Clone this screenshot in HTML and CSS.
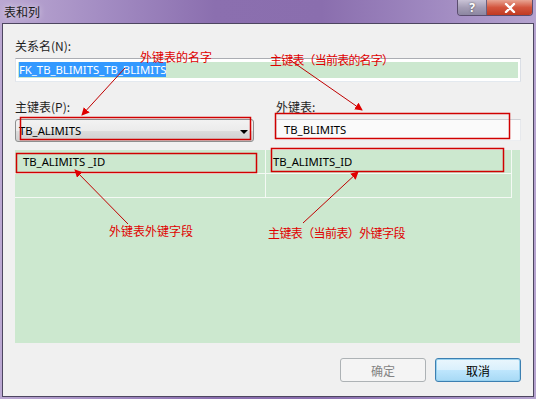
FILE: index.html
```html
<!DOCTYPE html>
<html lang="zh-CN">
<head>
    <meta charset="UTF-8">
    <title>表和列</title>
    <link rel="stylesheet" href="styles.css">
</head>
<body>
    <div class="window">
        <div class="titlebar">
            <span class="title">表和列</span>
            <div class="caption-btns">
                <span class="btn-help">?</span>
                <span class="btn-close">
                    <svg width="14" height="10" viewBox="0 0 14 10"><path d="M3 1 L11 9 M11 1 L3 9" stroke="#fff" stroke-width="2.4" stroke-linecap="round"/></svg>
                </span>
            </div>
        </div>

        <div class="client">
            <div class="label">关系名(N):</div>
            <div class="textbox name-box">
                <div class="fill"><span class="selected">FK_TB_BLIMITS_TB_BLIMITS</span></div>
            </div>

            <div class="tables">
                <div class="col">
                    <div class="label">主键表(P):</div>
                    <div class="combo">
                        <span>TB_ALIMITS</span>
                        <span class="caret"></span>
                    </div>
                </div>
                <div class="col">
                    <div class="label">外键表:</div>
                    <div class="textbox readonly">TB_BLIMITS</div>
                </div>
            </div>

            <div class="grid-area">
                <table class="columns">
                    <tr>
                        <td class="c1">TB_ALIMITS _ID</td>
                        <td class="c2">TB_ALIMITS_ID</td>
                    </tr>
                    <tr>
                        <td class="c1"></td>
                        <td class="c2"></td>
                    </tr>
                </table>
            </div>

            <div class="buttons">
                <button class="btn disabled">确定</button>
                <button class="btn default">取消</button>
            </div>
        </div>

        <!-- notes drawn on top of the screenshot -->
        <svg class="marks" width="536" height="399" viewBox="0 0 536 399">
            <defs>
                <marker id="head" markerWidth="8" markerHeight="8" refX="7" refY="4" orient="auto" markerUnits="userSpaceOnUse">
                    <path d="M0 0 L8 4 L0 8 Z" fill="#e00000"/>
                </marker>
            </defs>
            <g fill="none" stroke="#d00000" stroke-width="1.5">
                <rect x="20.5" y="117.5" width="230" height="22"/>
                <rect x="275.5" y="113.5" width="234" height="25"/>
                <rect x="16.5" y="153.5" width="240" height="19"/>
                <rect x="271.5" y="148.5" width="232" height="23"/>
            </g>
            <g stroke="#c00000" stroke-width="1" marker-end="url(#head)">
                <line x1="125" y1="68" x2="82" y2="115"/>
                <line x1="290" y1="60" x2="362" y2="110"/>
                <line x1="128" y1="224" x2="75" y2="170"/>
                <line x1="303" y1="223" x2="358" y2="172"/>
            </g>
        </svg>
        <span class="note note-fk">外键表的名字</span>
        <span class="note note-pk">主键表（当前表的名字）</span>
        <span class="note note-fkcol">外键表外键字段</span>
        <span class="note note-pkcol">主键表（当前表）外键字段</span>
    </div>
</body>
</html>
```

FILE: styles.css
```css
body {
    margin: 0;
    padding: 0;
    font-family: "Noto Sans", "Noto Sans CJK SC", sans-serif;
    font-size: 11.3px;
    color: #000;
}

.window {
    position: relative;
    width: 536px;
    height: 399px;
    box-sizing: border-box;
    padding: 0 2px 2px 2px;
    display: flex;
    flex-direction: column;
    background: linear-gradient(90deg, #bba8d2 0%, #a28bc2 20%, #8b6faf 40%, #8a6eae 60%, #9f88c0 80%, #b5a3cf 100%);
    overflow: hidden;
}

.titlebar {
    height: 23px;
    display: flex;
    justify-content: space-between;
    align-items: flex-start;
}

.title {
    margin: 4px 0 0 2px;
    font-family: "Noto Sans CJK SC", sans-serif;
    font-size: 12px;
    line-height: 16px;
    color: #1a1a1a;
    text-shadow: 0 0 6px rgba(255, 255, 255, 0.8);
}

.caption-btns {
    display: flex;
    height: 15px;
    margin-right: 1px;
    border: 1px solid #5a4d6e;
    border-top: none;
    border-radius: 0 0 4px 4px;
    overflow: hidden;
}

.btn-help {
    width: 28px;
    display: flex;
    align-items: center;
    justify-content: center;
    background: linear-gradient(#c9c3d6, #a49db5 50%, #8c86a1);
    color: #fff;
    font-weight: bold;
    font-size: 12px;
    line-height: 14px;
    text-shadow: 0 0 2px #444;
    border-right: 1px solid #6b5f7d;
}

.btn-close {
    width: 45px;
    display: flex;
    align-items: center;
    justify-content: center;
    background: linear-gradient(#e8a593, #d3553d 50%, #c03a22);
}

.client {
    flex: 1;
    border: 1px solid #4d4660;
    background: #f0f0f0;
    padding: 14px 12px 0 12px;
    display: flex;
    flex-direction: column;
}

.label {
    font-family: "Noto Sans CJK SC", sans-serif;
    font-size: 12px;
    line-height: 16px;
    color: #1e1e1e;
    height: 16px;
}

.textbox {
    margin-top: 4px;
    border: 1px solid #abadb3;
    border-color: #abadb3 #dbdfe6 #e3e9ef #e2e3ea;
    background: #fff;
    box-sizing: border-box;
}

.name-box {
    height: 24px;
    padding: 3px 2px 3px 2px;
}

.name-box .fill {
    height: 16px;
    background: #cce8cf;
    line-height: 15px;
    padding-left: 1px;
}

.selected {
    background: #3399ff;
    color: #fff;
    display: inline-block;
    height: 15px;
}

.tables {
    margin-top: 17px;
    display: flex;
    gap: 7px;
}

.tables .col:first-child {
    width: 253px;
}

.tables .col:last-child {
    flex: 1;
    padding-left: 8px;
}

.combo {
    margin-top: 4px;
    height: 23px;
    width: 239px;
    box-sizing: border-box;
    border: 1px solid #8e8f8f;
    border-radius: 3px;
    background: linear-gradient(#f2f2f2 0%, #ebebeb 50%, #dddddd 51%, #cfcfcf 100%);
    display: flex;
    align-items: center;
    justify-content: space-between;
    padding: 0 5px 0 3px;
}

.caret {
    width: 0;
    height: 0;
    border-left: 4px solid transparent;
    border-right: 4px solid transparent;
    border-top: 4px solid #000;
    margin-top: 2px;
}

.readonly {
    height: 22px;
    width: 245px;
    padding: 2px 7px;
    line-height: 16px;
    background: #fafafa;
    border-color: #cfd1d6 #e6e8ec #eceef1 #e6e8ec;
}

.grid-area {
    margin-top: 8px;
    height: 193px;
    width: 505px;
    background: #cce8cf;
}

.columns {
    border-collapse: collapse;
    width: 497px;
}

.columns td {
    height: 23px;
    padding: 0;
    border-right: 1px solid #f4f9f4;
    border-bottom: 1px solid #f4f9f4;
    line-height: 20px;
    vertical-align: middle;
}

.columns .c1 {
    width: 242px;
    padding-left: 8px;
}

.columns .c2 {
    padding-left: 7px;
}

.buttons {
    margin-top: 15px;
    display: flex;
    justify-content: flex-end;
    gap: 9px;
}

.btn {
    width: 86px;
    height: 24px;
    border-radius: 3px;
    font-family: "Noto Sans CJK SC", sans-serif;
    font-size: 12px;
    padding: 0;
}

.btn.disabled {
    border: 1px solid #adb2b5;
    background: #f4f4f4;
    color: #838383;
}

.btn.default {
    border: 1px solid #3c7fb1;
    background: linear-gradient(#eaf6fd 0%, #d9f0fc 50%, #bee6fd 51%, #a7d9f5 100%);
    box-shadow: inset 0 0 0 1px #98d1ef;
    color: #000;
}

.marks {
    position: absolute;
    left: 0;
    top: 0;
    pointer-events: none;
}

.note {
    position: absolute;
    font-family: "Noto Sans CJK SC", sans-serif;
    font-size: 12px;
    line-height: 14px;
    color: #e00000;
    white-space: nowrap;
}

.note-fk {
    left: 140px;
    top: 50px;
}

.note-pk {
    left: 270px;
    top: 53px;
    letter-spacing: -0.8px;
}

.note-fkcol {
    left: 109px;
    top: 224px;
}

.note-pkcol {
    left: 268px;
    top: 226px;
    letter-spacing: -0.6px;
}
```
